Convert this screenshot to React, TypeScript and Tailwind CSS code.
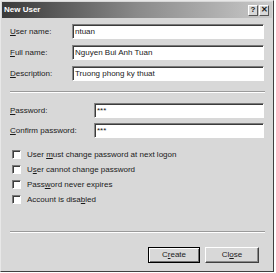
import type { ReactNode } from 'react'

function Mn({ children }: { children: ReactNode }) {
  return <span className="underline underline-offset-1">{children}</span>
}

function Field({ label, value, labelWidth }: { label: ReactNode; value: string; labelWidth: string }) {
  return (
    <div className="flex items-center">
      <div className={`${labelWidth} shrink-0`}>{label}</div>
      <div className="flex h-[15px] w-[193px] items-center border border-b-white border-l-[#8c8c8c] border-r-white border-t-[#7a7a7a] bg-white pl-[2px] shadow-[inset_1px_1px_0_#3c3c3c]">
        {value}
      </div>
    </div>
  )
}

function Check({ children }: { children: ReactNode }) {
  return (
    <div className="flex h-[15px] items-center gap-[6px]">
      <div className="h-[9px] w-[9px] border border-b-white border-l-[#7a7a7a] border-r-white border-t-[#7a7a7a] bg-white shadow-[inset_1px_1px_0_#3c3c3c]" />
      <span>{children}</span>
    </div>
  )
}

export default function App() {
  return (
    <div className="h-[273px] w-[276px] bg-white font-['Liberation_Sans',Arial,sans-serif] text-[8px] leading-none text-[#1a1a1a]">
      <div className="flex h-[272px] w-[274px] flex-col border border-b-[#404040] border-l-[#e8e8e8] border-r-[#404040] border-t-[#e8e8e8] bg-[#d8d8d8] p-[1px]">
        {/* title bar */}
        <div className="flex h-[16px] items-center justify-between bg-gradient-to-r from-[#3a3a3a] via-[#8a8a8a] to-[#cacaca] pl-[2px] pr-[3px]">
          <span className="font-bold text-white">New User</span>
          <div className="flex gap-[1px]">
            <div className="flex h-[11px] w-[10px] items-center justify-center border border-b-[#555] border-l-white border-r-[#555] border-t-white bg-[#d8d8d8] text-[8px] font-bold">?</div>
            <div className="flex h-[11px] w-[10px] items-center justify-center border border-b-[#555] border-l-white border-r-[#555] border-t-white bg-[#d8d8d8] text-[8px] font-bold">✕</div>
          </div>
        </div>

        <div className="flex flex-1 flex-col px-[8px] pt-[6px]">
          <div className="flex flex-col gap-[6px]">
            <Field labelWidth="w-[62px]" label={<><Mn>U</Mn>ser name:</>} value="ntuan" />
            <Field labelWidth="w-[62px]" label={<><Mn>F</Mn>ull name:</>} value="Nguyen Bui Anh Tuan" />
            <Field labelWidth="w-[62px]" label={<><Mn>D</Mn>escription:</>} value="Truong phong ky thuat" />
          </div>

          <div className="mt-[10px] h-[2px] w-[255px] border-b border-t border-b-white border-t-[#9a9a9a]" />

          <div className="mt-[10px] flex flex-col gap-[5px]">
            <Field labelWidth="w-[84px]" label={<><Mn>P</Mn>assword:</>} value="***" />
            <Field labelWidth="w-[84px]" label={<><Mn>C</Mn>onfirm password:</>} value="***" />
          </div>

          <div className="ml-[2px] mt-[9px] flex flex-col">
            <Check>User <Mn>m</Mn>ust change password at next logon</Check>
            <Check>U<Mn>s</Mn>er cannot change password</Check>
            <Check>Pass<Mn>w</Mn>ord never expires</Check>
            <Check>Account is disa<Mn>b</Mn>led</Check>
          </div>

          <div className="mt-[24px] h-[2px] w-[255px] border-b border-t border-b-white border-t-[#9a9a9a]" />

          <div className="mt-[14px] flex justify-end gap-[5px] pr-[5px]">
            <div className="flex h-[16px] w-[52px] items-center justify-center border border-black shadow-[inset_1px_1px_0_white,inset_-1px_-1px_0_#707070]">
              C<Mn>r</Mn>eate
            </div>
            <div className="flex h-[16px] w-[54px] items-center justify-center border border-b-[#404040] border-l-white border-r-[#404040] border-t-white shadow-[inset_-1px_-1px_0_#8a8a8a]">
              Cl<Mn>o</Mn>se
            </div>
          </div>
        </div>
      </div>
    </div>
  )
}
